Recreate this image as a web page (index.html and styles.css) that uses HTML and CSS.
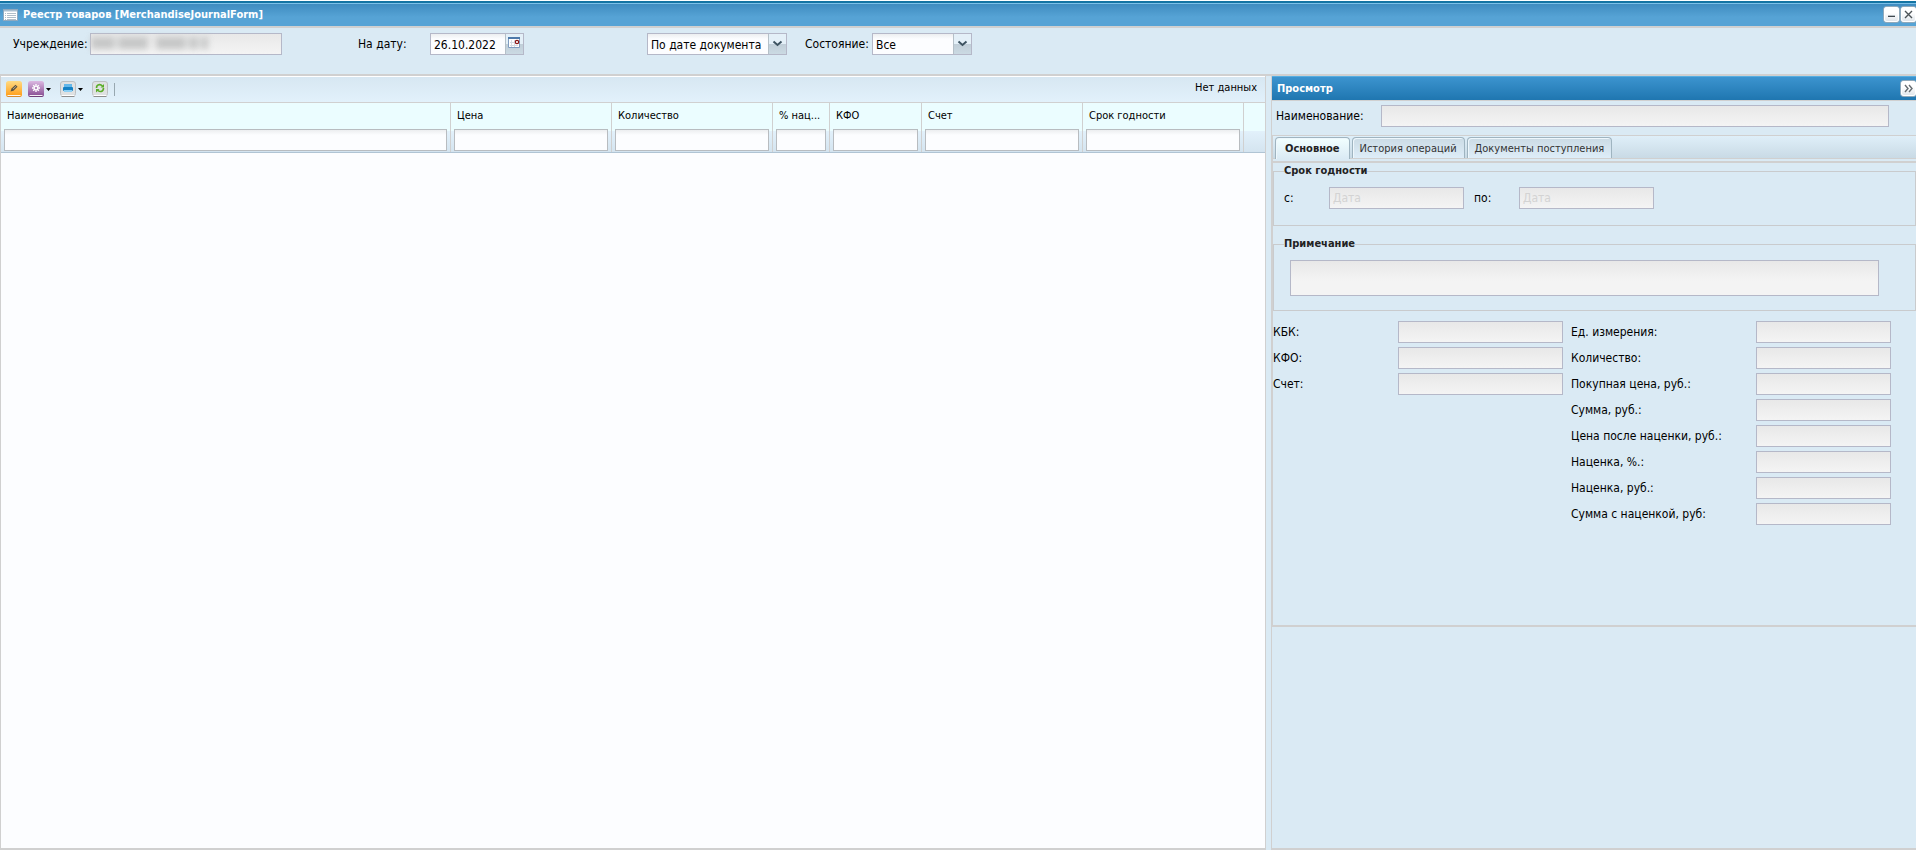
FILE: index.html
```html
<!DOCTYPE html>
<html lang="ru">
<head>
<meta charset="utf-8">
<title>Реестр товаров</title>
<link rel="stylesheet" href="styles.css">
</head>
<body>
<div class="window">
  <header class="titlebar">
    <svg class="form-icon" viewBox="0 0 15 12" width="15" height="12" aria-hidden="true"><rect x=".5" y=".5" width="14" height="11" fill="#fff" stroke="#8fa9bf"/><path d="M1 1h13v1.500H1z" fill="#a9bfd0"/><path d="M2 4.500h1M4 4.500h9M2 6.500h1M4 6.500h9M2 8.500h1M4 8.500h9M2 10.500h1M4 10.500h9" stroke="#9cadbb" stroke-width=".8"/></svg>
    <h1 class="title">Реестр товаров [MerchandiseJournalForm]</h1>
    <button class="tool" type="button" aria-label="Свернуть"><svg viewBox="0 0 15 15" width="15" height="15"><path d="M4 8.500h7" stroke="#b9bfc4"/><path d="M4 9.500h7" stroke="#3f474d"/></svg></button>
    <button class="tool" type="button" aria-label="Закрыть"><svg viewBox="0 0 15 15" width="15" height="15"><path d="M4 4l7 7M11 4l-7 7" stroke="#4c5357" stroke-width="1.400"/></svg></button>
  </header>

  <form class="filters">
    <div class="filter org">
      <label for="org">Учреждение:</label>
      <div class="masked"><input class="field" id="org" type="text" disabled><span class="mask"><i class="m1"></i><i class="m2"></i><i class="m3"></i><i class="m4"></i><i class="m5"></i></span></div>
    </div>
    <div class="filter date">
      <label for="date">На дату:</label>
      <div class="combo date-box"><input id="date" type="text" value="26.10.2022"><button class="trigger" type="button" aria-label="Календарь"><svg viewBox="0 0 17 20" width="17" height="20"><path d="M2.500 4.500h11v9h-11z" fill="#fff" stroke="#7f9cc0"/><path d="M2 4h12" stroke="#4d79aa" stroke-width="2"/><path d="M4 8.500h8M4 11.500h8M5.500 6v7M8.500 6v7" stroke="#d5dce4"/><circle cx="11" cy="8" r="1.700" fill="#fff" stroke="#8c1515" stroke-width="1.200"/></svg></button></div>
    </div>
    <div class="filter mode">
      <div class="combo mode-box"><select aria-label="Вид даты"><option>По дате документа</option></select><span class="trigger"><svg viewBox="0 0 17 20" width="17" height="20"><path d="M4.500 7.500l4 3.500 4-3.500" fill="none" stroke="#3d5361" stroke-width="2"/></svg></span></div>
    </div>
    <div class="filter state">
      <label for="state">Состояние:</label>
      <div class="combo state-box"><select id="state"><option>Все</option></select><span class="trigger"><svg viewBox="0 0 17 20" width="17" height="20"><path d="M4.500 7.500l4 3.500 4-3.500" fill="none" stroke="#3d5361" stroke-width="2"/></svg></span></div>
    </div>
  </form>

  <main class="workspace">
    <section class="journal">
      <div class="toolbar">
        <button class="action" type="button" aria-label="Изменить"><svg viewBox="0 0 16 16" width="16" height="16"><defs><linearGradient id="or" x2="0" y2="1"><stop stop-color="#ffdb84"/><stop offset="1" stop-color="#ff9a12"/></linearGradient></defs><rect width="16" height="16" rx="2.500" fill="url(#or)"/><path d="M1.500 14.600h13" stroke="#fff"/><path d="M1.500 15.500h13" stroke="#d88a2c"/><path d="M4.500 10.500l1-3 4-3.700 2 2-4 4z" fill="#5d5340"/><path d="M7 8l3-2.800" stroke="#c5b795" stroke-width=".8"/></svg></button>
        <button class="action menu" type="button" aria-label="Действия"><svg viewBox="0 0 23 16" width="23" height="16"><defs><linearGradient id="pu" x2="0" y2="1"><stop stop-color="#dcb9e2"/><stop offset="1" stop-color="#83488f"/></linearGradient></defs><rect width="16" height="16" rx="2.500" fill="url(#pu)"/><path d="M1.500 14.600h13" stroke="#fff"/><path d="M1.500 15.500h13" stroke="#704079"/><path d="M8 3v8M4 7h8M5.200 4.200l5.600 5.600M10.800 4.200l-5.600 5.600" stroke="#fff" stroke-width="1.400"/><circle cx="8" cy="7" r="1.200" fill="#b98bc1"/><path d="M18 7h5l-2.500 3z" fill="#000"/></svg></button>
        <button class="action menu" type="button" aria-label="Печать"><svg viewBox="0 0 23 16" width="23" height="16"><rect x=".5" y=".5" width="15" height="14.500" rx="2.500" fill="#dfe1e2" stroke="#bcbfc1"/><path d="M1.500 14.500h13" stroke="#fff"/><path d="M1.500 15.500h13" stroke="#8d8d8d"/><rect x="4" y="3" width="8" height="3" fill="#63b7e9"/><rect x="3" y="6" width="10" height="4" rx="1" fill="#1581c4"/><rect x="4" y="9" width="8" height="2" fill="#8ed0f5"/><path d="M18 7h5l-2.500 3z" fill="#000"/></svg></button>
        <button class="action" type="button" aria-label="Обновить"><svg viewBox="0 0 16 16" width="16" height="16"><rect x=".5" y=".5" width="15" height="14.500" rx="2.500" fill="#dfe1e2" stroke="#bcbfc1"/><path d="M1.500 14.500h13" stroke="#fff"/><path d="M1.500 15.500h13" stroke="#8d8d8d"/><path d="M4.500 7c0-4 4-4 6-2M11.500 7c0 4-4 4.300-6 2.300" fill="none" stroke="#5aad28" stroke-width="1.600"/><path d="M12 3v3.500H8.500zM4 11.500V8h3.500z" fill="#5aad28"/></svg></button>
        <span class="separator"></span>
        <output class="status">Нет данных</output>
      </div>
      <table class="grid">
        <colgroup><col><col class="c-wide"><col class="c-wide"><col class="c-pct"><col class="c-kfo"><col class="c-wide"><col class="c-wide"><col class="c-rest"></colgroup>
        <thead>
          <tr class="names"><th scope="col">Наименование</th><th scope="col">Цена</th><th scope="col">Количество</th><th scope="col">% нац...</th><th scope="col">КФО</th><th scope="col">Счет</th><th scope="col">Срок годности</th><td></td></tr>
          <tr class="search"><td><input type="text" aria-label="Наименование"></td><td><input type="text" aria-label="Цена"></td><td><input type="text" aria-label="Количество"></td><td><input type="text" aria-label="% наценки"></td><td><input type="text" aria-label="КФО"></td><td><input type="text" aria-label="Счет"></td><td><input type="text" aria-label="Срок годности"></td><td></td></tr>
        </thead>
      </table>
    </section>
    <div class="splitter"></div>
    <aside class="preview">
      <header class="preview-head">
        <h2 class="title">Просмотр</h2>
        <button class="tool" type="button" aria-label="Скрыть панель"><svg viewBox="0 0 15 15" width="15" height="15"><path d="M4 4l3 3.500L4 11M8 4l3 3.500L8 11" fill="none" stroke="#666d72" stroke-width="1.400"/></svg></button>
      </header>
      <div class="item-name"><label for="item">Наименование:</label><input class="field" id="item" type="text" disabled></div>
      <div class="details">
        <nav class="tabs">
          <button class="tab active" type="button">Основное</button>
          <button class="tab" type="button">История операций</button>
          <button class="tab" type="button">Документы поступления</button>
        </nav>
        <div class="tab-edge"></div>
        <fieldset class="group expiry">
          <legend>Срок годности</legend>
          <div class="dates"><label for="from">с:</label><input class="field" id="from" type="text" placeholder="Дата" disabled><label for="to">по:</label><input class="field" id="to" type="text" placeholder="Дата" disabled></div>
        </fieldset>
        <fieldset class="group note">
          <legend>Примечание</legend>
          <textarea class="field" aria-label="Примечание" disabled></textarea>
        </fieldset>
        <div class="props">
          <div class="column codes">
            <label for="kbk">КБК:</label><input class="field" id="kbk" type="text" disabled>
            <label for="kfo">КФО:</label><input class="field" id="kfo" type="text" disabled>
            <label for="acc">Счет:</label><input class="field" id="acc" type="text" disabled>
          </div>
          <div class="column sums">
            <label for="unit">Ед. измерения:</label><input class="field" id="unit" type="text" disabled>
            <label for="qty">Количество:</label><input class="field" id="qty" type="text" disabled>
            <label for="buy">Покупная цена, руб.:</label><input class="field" id="buy" type="text" disabled>
            <label for="sum">Сумма, руб.:</label><input class="field" id="sum" type="text" disabled>
            <label for="after">Цена после наценки, руб.:</label><input class="field" id="after" type="text" disabled>
            <label for="mp">Наценка, %.:</label><input class="field" id="mp" type="text" disabled>
            <label for="mr">Наценка, руб.:</label><input class="field" id="mr" type="text" disabled>
            <label for="total">Сумма с наценкой, руб:</label><input class="field" id="total" type="text" disabled>
          </div>
        </div>
      </div>
    </aside>
  </main>
</div>
</body>
</html>
```
FILE: styles.css
```css
* { box-sizing: border-box; }

body {
  margin: 0;
  background: #daeaf4;
  color: #000;
  font: 12px/16px "DejaVu Sans Condensed", "Noto Sans", sans-serif;
}

input, select, button, textarea {
  font: inherit;
  color: inherit;
  margin: 0;
}

button { padding: 0; border: 0; background: none; }

.window { display: flex; flex-direction: column; min-height: 100vh; padding-top: 1px; background: linear-gradient(#fff 1px, #daeaf4 1px); }

.titlebar {
  display: flex;
  align-items: center;
  gap: 2px;
  height: 27px;
  padding-left: 3px;
  border-top: 2px solid #1474a3;
  border-bottom: 2px solid #d0d0d0;
  background: linear-gradient(#7cc0e8 1px, #3f8cc0 1px, #56a3d5 14px, #56a3d5);
}

.form-icon { margin-right: 3px; }

.title { flex: 1; margin: 0; font-size: 11px; font-weight: bold; color: #fff; }

.tool {
  display: flex;
  width: 15px;
  height: 15px;
  border-radius: 3px;
  background: linear-gradient(#fff 40%, #dde3e9);
  box-shadow: inset 0 0 0 1px #fff, 0 0 0 1px #8fa9bb;
}

.field {
  height: 22px;
  padding: 2px 3px;
  border: 1px solid #b5b8c8;
  border-radius: 0;
  background: linear-gradient(#e8e8e8, #f4f4f4 20px);
}

.field::placeholder { color: #d3d3d3; opacity: 1; }

.filters { display: flex; height: 48px; padding: 5px 13px; border-bottom: 2px solid #d0d0d0; }

.filter { display: flex; align-items: center; height: 22px; }
.filter label { padding-bottom: 1px; white-space: nowrap; }
.filter.org { width: 345px; }
.org label { width: 77px; }
.filter.date { width: 289px; }
.date label { width: 72px; }
.filter.mode { width: 158px; }
.state label { width: 67px; }

.masked { position: relative; width: 192px; height: 22px; }
.masked .field { display: block; width: 100%; }
.mask { position: absolute; inset: 1px 40px 3px 1px; overflow: hidden; display: flex; gap: 3px; align-items: center; filter: blur(3px); }
.mask i { height: 12px; background: #c6c7c7; }
.m1 { width: 24px; }
.m2 { width: 30px; }
.m3 { width: 30px; margin-left: 5px; }
.m4 { width: 9px; }
.m5 { width: 7px; }

.combo { display: flex; height: 22px; border: 1px solid #b5b8c8; background: linear-gradient(#eceef0, #fcfdff 5px); }
.combo input, .combo select { flex: 1; min-width: 0; padding: 2px 3px 0; border: 0; background: none; appearance: none; }
.date-box { width: 94px; }
.mode-box { width: 140px; }
.state-box { width: 100px; }
.trigger { flex: none; width: 18px; border-left: 1px solid #b5c0c8; background: linear-gradient(#e4f0f8 10px, #c0ced8 10px, #cbdae3); }
.trigger svg { display: block; }

.workspace { flex: 1; display: grid; grid-template-columns: 1266fr 5px 645fr; }

.journal {
  min-width: 0;
  border: 1px solid #d0d0d0;
  border-width: 0 1px 2px;
  background: #fcfdff;
}

.toolbar {
  display: flex;
  align-items: center;
  height: 27px;
  padding: 0 8px 0 5px;
  border-bottom: 1px solid #d0d0d0;
  background: linear-gradient(#fff 1px, #d7e7f2 1px, #e2f1fb);
}

.action { display: flex; margin-right: 6px; }
.action.menu { margin-right: 9px; }
.separator { width: 1px; height: 13px; margin-top: 1px; background: #98a8b0; }
.status { margin-left: auto; margin-bottom: 3px; font-size: 11px; }

.grid { width: 100%; table-layout: fixed; border-collapse: separate; border-spacing: 0; font-size: 11px; border-bottom: 1px solid #b0c4d4; }
.c-wide { width: 161px; }
.c-pct { width: 57px; }
.c-kfo { width: 92px; }
.c-rest { width: 21px; }
.grid th, .grid td { padding: 0; border-right: 1px solid #d0d0d0; text-align: left; font-weight: normal; }
.grid td:last-child { border-right: 0; }
.names { height: 26px; background: #ebfdff; }
.names th { padding: 0 0 0 6px; white-space: nowrap; overflow: hidden; }
.search { height: 23px; background: linear-gradient(#ebfdff 2px, #e2f1fb 2px, #d4e4f0); }
.grid .search td { padding: 0 3px 1px; }
.search input { display: block; width: 100%; height: 22px; padding: 0 3px; border: 1px solid #b8bcc0; background: linear-gradient(#eceef0, #fcfdff 5px); }

.preview { min-width: 0; border-left: 1px solid #d0d0d0; border-bottom: 2px solid #d0d0d0; }

.preview-head {
  display: flex;
  align-items: center;
  height: 25px;
  padding-left: 5px;
  border-bottom: 1px solid #d0d0d0;
  background: linear-gradient(#58aee0 1px, #3c94cf 1px, #1f76b0);
}
.preview-head .title { padding-top: 2px; }

.item-name { display: flex; align-items: flex-start; height: 34px; padding: 4px 27px 0 4px; }
.item-name label { width: 105px; padding-top: 3px; }
.item-name .field { flex: 1; min-width: 0; }

.details { height: 492px; border: 1px solid #d0d0d0; border-width: 1px 0 2px 1px; }

.tabs { display: flex; gap: 2px; height: 23px; padding: 1px 0 0 2px; border-bottom: 1px solid #d0d0d0; background: linear-gradient(#dfeff9, #c9dae5); }
.tab { flex: none; height: 21px; padding: 1px 7px 0; border: 1px solid #9fb4c0; border-bottom: 0; border-radius: 4px 4px 0 0; background: linear-gradient(#cbdbe5, #deedf8); font-size: 11px; color: #333; box-shadow: inset 1px 1px 0 #eef7fc; }
.tab.active { height: 22px; padding: 1px 9px 0; background: linear-gradient(#f2ffff, #daeaf4); font-weight: bold; color: #222; }
.tab-edge { height: 4px; border-bottom: 2px solid #d0d0d0; }

.group { margin: 0; border: 1px solid #c9cbcd; padding: 0; min-width: 0; }
.group legend { margin-left: 10px; padding: 0; font-size: 11px; line-height: 16px; font-weight: bold; color: #222; }
.expiry { height: 63px; }
.dates { display: flex; align-items: center; padding: 8px 0 0 10px; }
.dates label { width: 45px; }
.dates .field { width: 135px; margin-right: 10px; }
.note { height: 75px; margin-top: 10px; }
.note textarea { display: block; width: calc(100% - 52px); height: 36px; margin: 8px 0 0 16px; resize: none; }

.props { display: flex; gap: 8px; padding-top: 10px; }
.column { display: grid; align-content: start; align-items: center; row-gap: 4px; }
.codes { grid-template-columns: 125px 165px; }
.sums { grid-template-columns: 185px 135px; }
```
